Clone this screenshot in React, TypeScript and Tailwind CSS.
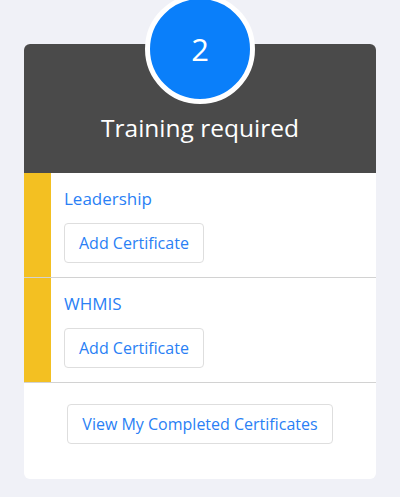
import React from "react";

const items = ["Leadership", "WHMIS"];

const App: React.FC = () => {
  return (
    <div className="min-h-[497px] bg-[#f0f1f7] px-6 pt-[44px] pb-5 font-['Open_Sans',sans-serif]">
      <div className="relative rounded-md bg-white">
        <div className="absolute left-1/2 top-[-50px] flex h-[110px] w-[110px] -translate-x-1/2 items-center justify-center rounded-full border-[5px] border-white bg-[#0a7ffa]">
          <span className="text-[31px] leading-none text-white">2</span>
        </div>
        <div className="flex h-[129px] items-end justify-center rounded-t-md bg-[#4a4a4a] pb-[33px]">
          <h2 className="text-[24.5px] leading-none text-white">Training required</h2>
        </div>
        {items.map((name) => (
          <div key={name} className="flex border-b border-[#d2d2d2]">
            <div className="w-[27px] bg-[#f3c022]" />
            <div className="flex flex-col items-start px-[13px] pt-[14px] pb-[14px]">
              <p className="text-[17px] leading-[24px] text-[#2a7ff5]">{name}</p>
              <button className="mt-[12px] h-[40px] rounded border border-[#dedede] bg-white px-[14px] text-[16px] text-[#2a7ff5]">
                Add Certificate
              </button>
            </div>
          </div>
        ))}
        <div className="flex justify-center pt-[21px] pb-[35px]">
          <button className="h-[40px] rounded border border-[#dedede] bg-white px-[14px] text-[16px] text-[#2a7ff5]">
            View My Completed Certificates
          </button>
        </div>
      </div>
    </div>
  );
};

export default App;
